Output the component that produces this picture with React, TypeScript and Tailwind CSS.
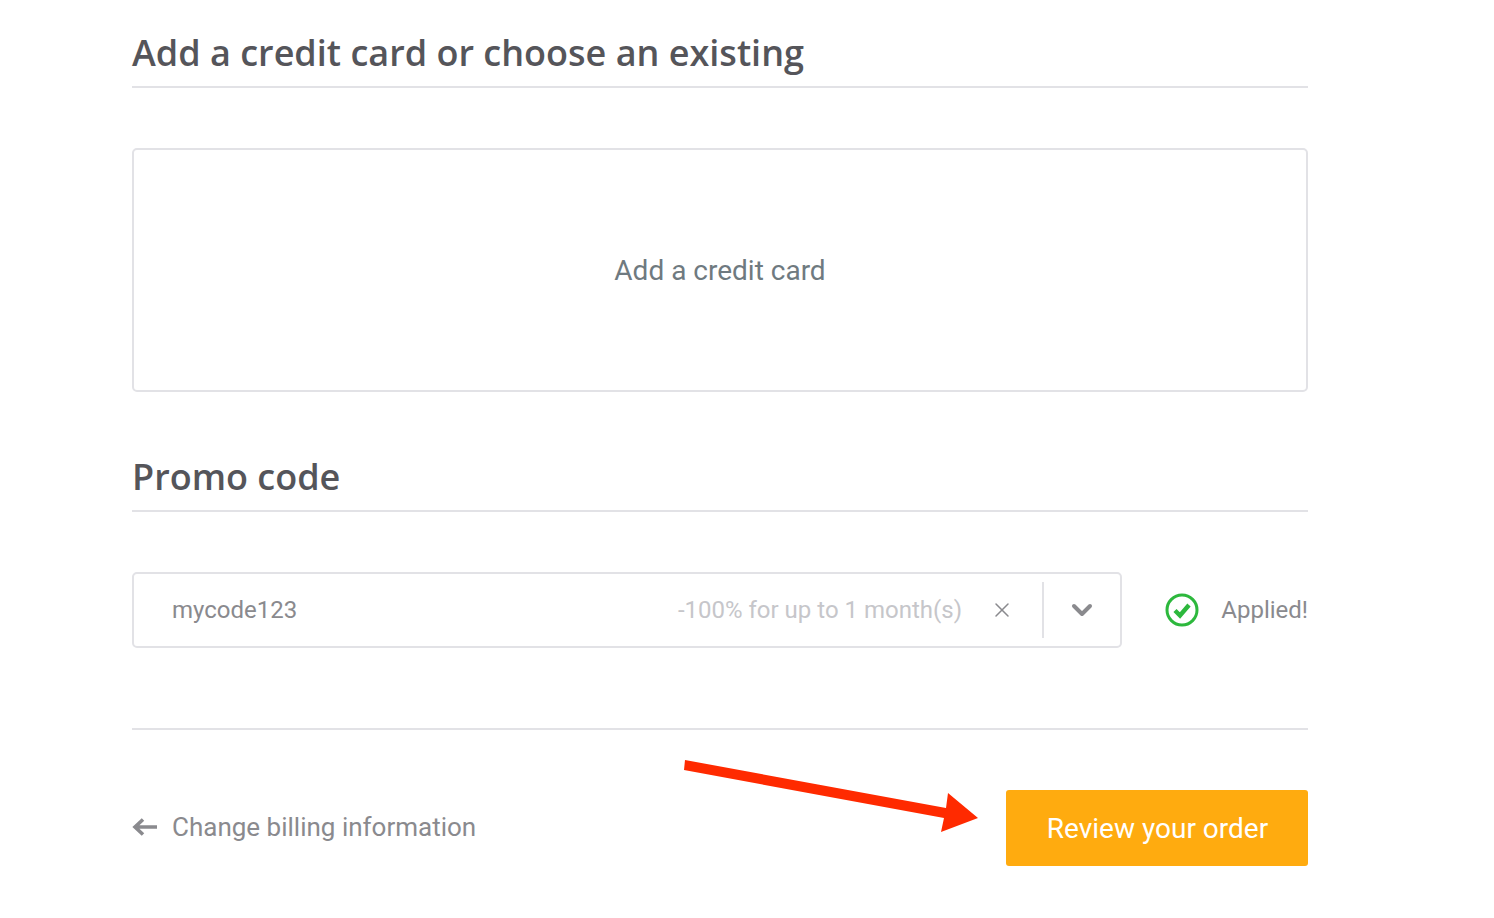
import { ChevronDown, X } from "lucide-react";

const SectionTitle = ({ title }: { title: string }) => (
  <div className="h-[54px] border-b-2 border-[#e2e2e6]">
    <h2 className="font-['Open_Sans',sans-serif] text-[36px] leading-[38px] font-semibold text-[#55555a]">{title}</h2>
  </div>
);

export default function App() {
  return (
    <div className="relative h-[918px] w-[1494px] overflow-hidden bg-white font-['Roboto',sans-serif]">
      <div className="ml-[132px] w-[1176px] pt-[34px]">
        <SectionTitle title="Add a credit card or choose an existing" />

        <button className="mt-[60px] flex h-[244px] w-full items-center justify-center rounded-[5px] border-2 border-[#e2e2e6] pt-[2px] text-[28px] text-[#6f7a80]">
          Add a credit card
        </button>

        <div className="mt-[66px]">
          <SectionTitle title="Promo code" />
        </div>

        <div className="mt-[60px] flex items-center justify-between">
          <div className="flex h-[76px] w-[990px] items-center rounded-[5px] border-2 border-[#e2e2e6] pr-[22px] pl-[38px]">
            <span className="text-[24px] text-[#8a8a8e]">mycode123</span>
            <span className="ml-auto text-[24px] text-[#c6c6ca]">-100% for up to 1 month(s)</span>
            <X className="ml-[28px] size-[24px] text-[#8a8a8e]" strokeWidth={1.5} />
            <div className="ml-[28px] h-[56px] w-[2px] bg-[#e2e2e6]" />
            <ChevronDown className="ml-[22px] size-[32px] text-[#8a8a8e]" strokeWidth={3} />
          </div>
          <div className="flex items-center">
            <svg viewBox="0 0 34 34" className="size-[34px]">
              <circle cx="17" cy="17" r="15" fill="none" stroke="#2db83d" strokeWidth="3" />
              <path d="M10 17.5 15 22.5 24 12" fill="none" stroke="#2db83d" strokeWidth="4.4" />
            </svg>
            <span className="ml-[22px] text-[24px] text-[#8a8a8e]">Applied!</span>
          </div>
        </div>

        <div className="mt-[80px] border-t-2 border-[#e2e2e6]" />

        <div className="mt-[60px] flex items-center justify-between">
          <a className="-mt-[2px] flex items-center text-[26px] text-[#8a8a8e]">
            <svg viewBox="0 0 25 20" className="h-[20px] w-[25px]">
              <path d="M25 10H3M11 2.5 3 10l8 7.5" fill="none" stroke="#8a8a8e" strokeWidth="3.6" />
            </svg>
            <span className="ml-[15px]">Change billing information</span>
          </a>
          <button className="h-[76px] w-[302px] rounded-[3px] bg-[#ffab0f] pt-[2px] pl-[1px] text-[28px] text-white">Review your order</button>
        </div>
      </div>

      {/* annotation arrow */}
      <svg className="absolute top-0 left-0" width="1494" height="918">
        <polygon points="685,760 684,770 944,818 941,832 978,818 948,793 946,808" fill="#ff2a00" />
      </svg>
    </div>
  );
}
